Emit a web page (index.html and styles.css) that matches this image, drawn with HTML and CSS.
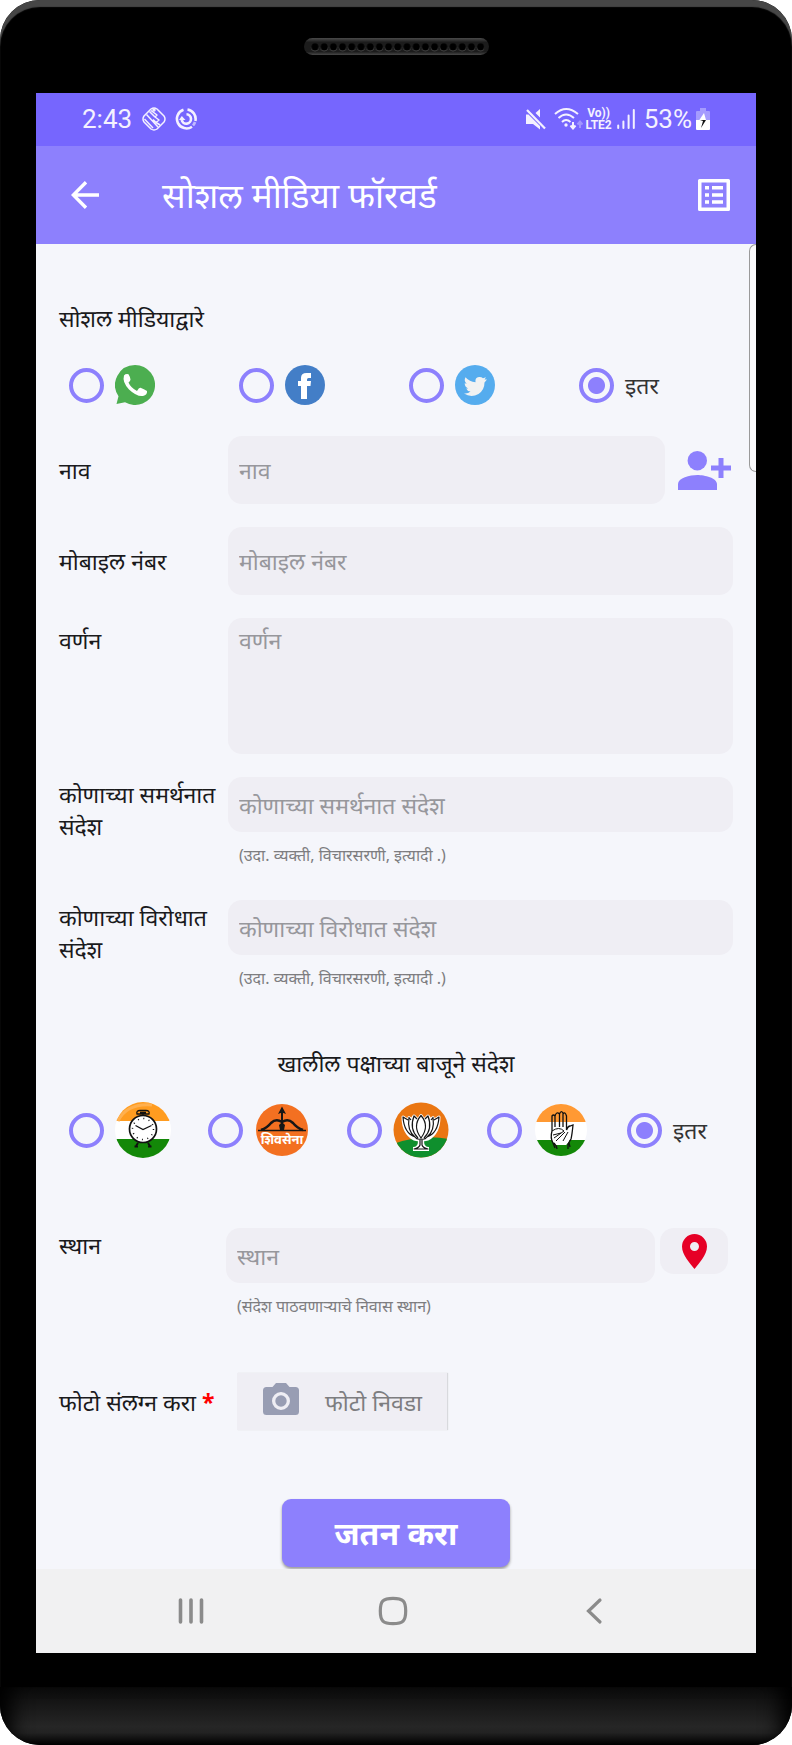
FILE: index.html
```html
<!DOCTYPE html>
<html lang="mr">
<head>
<meta charset="utf-8">
<meta name="viewport" content="width=device-width, initial-scale=1">
<title>सोशल मीडिया फॉरवर्ड</title>
<link rel="stylesheet" href="styles.css">
</head>
<body>
<div class="device">
  <div class="bezel-top">
    <svg class="speaker" viewBox="0 0 185 17" aria-hidden="true">
      <defs>
        <linearGradient id="spk" x1="0" y1="0" x2="0" y2="1"><stop offset="0" stop-color="#4a4a4a"/><stop offset=".25" stop-color="#1c1c1c"/><stop offset=".8" stop-color="#1c1c1c"/><stop offset="1" stop-color="#484848"/></linearGradient>
        <pattern id="holes" x="6.4" y="0" width="9.2" height="17" patternUnits="userSpaceOnUse"><circle cx="4.6" cy="9.6" r="3.8" fill="#4a4a4a"/><circle cx="4.6" cy="8.8" r="3.6" fill="#000"/></pattern>
      </defs>
      <rect width="185" height="17" rx="8.5" fill="url(#spk)"/>
      <rect x="6.4" width="174" height="17" fill="url(#holes)"/>
    </svg>
  </div>

  <div class="screen">
    <div class="status">
      <span class="clock">2:43</span>
      <svg class="ico-chip" viewBox="0 0 24 24" fill="none" stroke="currentColor" stroke-width="1.500" stroke-linejoin="round" aria-hidden="true"><path d="M9 2Q12 0 15 2L22 9Q24 12 22 15L15 22Q12 24 9 22L2 15Q0 12 2 9Z"/><path d="M4.500 7.500L16 20M7.500 4.500L13 10M2.500 12L11 21M9 3.500L15 8L13 10L17 13L14 15.500L18 18M14 15.500L11 12.500"/><circle cx="12" cy="3" r="1"/></svg>
      <svg class="ico-sync" viewBox="0 0 22 22" fill="none" stroke="currentColor" stroke-width="2.600" aria-hidden="true"><path d="M8.500 1.700A9.600 9.600 0 1 0 17 18.700M12.500 1.500A9.600 9.600 0 0 1 20.400 13"/><path d="M20 14A9.600 9.600 0 0 1 18 17.500" opacity=".6"/><path d="M11.500 6.300A4.700 4.700 0 1 1 6.700 12"/><path d="M4 12L6.800 8L10.500 12Z" fill="currentColor" stroke="none"/></svg>
      <span class="spacer"></span>
      <svg class="ico-mute" viewBox="0 0 20 22" fill="currentColor" aria-hidden="true"><path d="M0 6.500H2.500L14 18V21.500L7 16H0ZM14 1V9.500L9.500 5Z"/><path d="M1 2L19 20.500" fill="none" stroke="currentColor" stroke-width="2.200"/></svg>
      <svg class="ico-wifi" viewBox="0 0 29 23" fill="none" stroke="currentColor" stroke-width="2" aria-hidden="true"><path d="M1 7Q12-3 24 7M4.500 11Q12 4 20 11M8 15Q12 11 16.500 15"/><circle cx="12" cy="18" r="1.700" fill="currentColor" stroke="none"/><path d="M19 15V21M16.500 18.500L19 21.500L21.500 18.500"/><path d="M26 21V15M23.500 17.500L26 14.500L28.500 17.500" opacity=".35"/></svg>
      <span class="volte"><span>Vo))</span><span>LTE2</span></span>
      <svg class="ico-bars" viewBox="0 0 18 22" stroke="currentColor" stroke-width="2" stroke-linecap="round" aria-hidden="true"><path d="M1.200 17.500V20M6.400 13.500V20M11.600 7.500V20M16.800 2V20"/></svg>
      <span class="percent">53%</span>
      <svg class="ico-battery" viewBox="0 0 14 22" aria-hidden="true"><path d="M4 0H10V3H13Q14 3 14 4V12H0V4Q0 3 1 3H4Z" fill="#fff" opacity=".35"/><path d="M0 12H14V21Q14 22 13 22H1Q0 22 0 21Z" fill="#fff"/><path d="M8 5L3 12.500H7L10 12Z" fill="#fff"/><path d="M4 12H10L5 20L7 13Z" fill="#111"/></svg>
    </div>

    <header class="appbar">
      <button class="icon-btn back" type="button" aria-label="मागे"><svg viewBox="0 0 28 28" fill="none" stroke="currentColor" stroke-width="3.400" aria-hidden="true"><path d="M28 14H3M15 1.300L2.300 14L15 26.700"/></svg></button>
      <h1>सोशल मीडिया फॉरवर्ड</h1>
      <button class="icon-btn list" type="button" aria-label="यादी"><svg viewBox="0 0 32 32" fill="currentColor" aria-hidden="true"><path fill-rule="evenodd" d="M1.500 0H30.500Q32 0 32 1.500V30.500Q32 32 30.500 32H1.500Q0 32 0 30.500V1.500Q0 0 1.500 0ZM3.500 3.500V28.500H28.500V3.500Z"/><path d="M7 7H11V10.500H7ZM14 7H25V10.500H14ZM7 14.200H11V17.700H7ZM14 14.200H25V17.700H14ZM7 21.300H11V24.800H7ZM14 21.300H25V24.800H14Z"/></svg></button>
    </header>

    <main class="content">
      <div class="scrollbar" aria-hidden="true"></div>
      <form class="form">
        <p class="label" id="via">सोशल मीडियाद्वारे</p>
        <div class="choices social" role="radiogroup" aria-labelledby="via">
          <label class="choice"><input type="radio" name="via" aria-label="WhatsApp">
            <svg width="40" height="40" viewBox="0 0 40 40" aria-hidden="true"><path d="M20 0A20 20 0 1 1 10 37.300L1.500 39L3.500 31.200A20 20 0 0 1 20 0Z" fill="#4cae50"/><path d="M9 10.500Q10.500 8.500 13.500 9.200Q15 11.500 15.500 14.500Q15.500 16 13.500 17.500Q15.500 22.500 22 26Q24 22.500 25.500 22.800Q29 24 32 26Q32.500 30 28 31Q22 32 14 24.500Q7 17 9 10.500Z" fill="#fff"/></svg></label>
          <label class="choice"><input type="radio" name="via" aria-label="Facebook">
            <svg width="40" height="40" viewBox="0 0 40 40" aria-hidden="true"><circle cx="20" cy="20" r="20" fill="#437ec7"/><path d="M16 34V21H13V16H16V13Q16 8 21.500 8H26V13H23.500Q22 13 22 14.500V16H26L25.500 21H22V34Z" fill="#fff"/></svg></label>
          <label class="choice"><input type="radio" name="via" aria-label="Twitter">
            <svg width="40" height="40" viewBox="0 0 40 40" aria-hidden="true"><circle cx="20" cy="20" r="20" fill="#55acee"/><path d="M32 14.500L29.500 17.500Q29.500 25 23.500 29Q16 33 9 28.500Q13 29 15.500 26.500Q12 26 11.200 23.500H13.200Q9.700 22 9.700 18.300L11.700 18.800Q8.500 16 10.500 12.300Q14.500 17 20.500 17.200Q19.800 12.500 24 12Q26.500 11.800 28 13.300L31 12.200L29.500 14.500Z" fill="#f1f2f2"/></svg></label>
          <label class="choice"><input type="radio" name="via" checked><span>इतर</span></label>
        </div>

        <div class="row">
          <label class="label" for="name">नाव</label>
          <input class="field tall" id="name" type="text" placeholder="नाव">
          <button class="add" type="button" aria-label="संपर्क जोडा"><svg viewBox="0 0 53 39" fill="currentColor" aria-hidden="true"><circle cx="19.300" cy="9.700" r="9.700"/><path d="M0 39V33C0 27 12 24 19.300 24S39 27 39 33V39ZM40.500 7H45.500V14.500H53V19.500H45.500V27H40.500V19.500H33V14.500H40.500Z"/></svg></button>
        </div>
        <div class="row">
          <label class="label" for="mobile">मोबाइल नंबर</label>
          <input class="field tall" id="mobile" type="tel" placeholder="मोबाइल नंबर">
        </div>
        <div class="row top area-row">
          <label class="label" for="desc">वर्णन</label>
          <textarea class="field area" id="desc" placeholder="वर्णन"></textarea>
        </div>
        <div class="row top">
          <label class="label" for="support">कोणाच्या समर्थनात संदेश</label>
          <div class="stack"><input class="field" id="support" type="text" placeholder="कोणाच्या समर्थनात संदेश"><p class="hint">(उदा. व्यक्ती, विचारसरणी, इत्यादी .)</p></div>
        </div>
        <div class="row top oppose">
          <label class="label" for="oppose">कोणाच्या विरोधात संदेश</label>
          <div class="stack"><input class="field" id="oppose" type="text" placeholder="कोणाच्या विरोधात संदेश"><p class="hint">(उदा. व्यक्ती, विचारसरणी, इत्यादी .)</p></div>
        </div>

        <p class="label party-title" id="party">खालील पक्षाच्या बाजूने संदेश</p>
        <div class="choices parties" role="radiogroup" aria-labelledby="party">
          <label class="choice"><input type="radio" name="party" aria-label="राष्ट्रवादी">
            <svg width="56" height="56" viewBox="0 0 56 56" aria-hidden="true"><defs><clipPath id="c1"><circle cx="28" cy="28" r="28"/></clipPath></defs><g clip-path="url(#c1)"><path fill="#fff" d="M0 0H56V56H0Z"/><path fill="#ff9c20" d="M0 0H56V19H0Z"/><path fill="#138808" d="M0 37H56V56H0Z"/><path d="M3 19Q12 1 37 3" fill="none" stroke="#ffb04f" stroke-width="3"/></g>
              <g fill="none" stroke="#111"><path d="M23 41L21 44M33 41L35 44" stroke-width="2"/><path d="M19.500 44.500H23M33 44.500H36.500" stroke-width="2"/><circle cx="28" cy="27" r="13.500" fill="#fff" stroke-width="1.700"/><path d="M22 12Q21 8.500 25 8.500H31Q35 8.500 34 12ZM25 10.500H31M28 10.500V14" stroke-width="1.300"/><circle cx="28" cy="27" r="10.500" stroke-dasharray="1 4.500" stroke-width="1.500"/><path d="M20.500 23.500L28 27.500L36.500 23.500" stroke-width="1.300"/></g></svg></label>
          <label class="choice"><input type="radio" name="party" aria-label="शिवसेना">
            <svg width="56" height="56" viewBox="-2 -2 56 56" aria-hidden="true"><circle cx="26" cy="26" r="26" fill="#f37021"/><g fill="none" stroke="#161616"><path d="M2 26.500H50" stroke-width="1.700"/><path d="M5 26Q11 24 15 19Q20 14 26 18Q32 14 37 19Q41 24 47 26" stroke-width="2.500"/><path d="M26 26V7" stroke-width="2"/></g><path d="M26 2.500L30 10L26 8.500L22 10ZM24 26L23 21L26 18L29 21L28 26Z" fill="#161616"/><text class="badge-text" x="26" y="40" text-anchor="middle">शिवसेना</text></svg></label>
          <label class="choice"><input type="radio" name="party" aria-label="भाजप">
            <svg width="56" height="56" viewBox="0 0 56 56" aria-hidden="true"><defs><clipPath id="c3"><circle cx="28" cy="28" r="27.500"/></clipPath></defs><g clip-path="url(#c3)"><path fill="#ea7612" d="M0 0H56V56H0Z"/><path fill="#0f8f2d" d="M0 42Q28 32 56 37V56H0Z"/></g>
              <g stroke-linejoin="round"><path d="M28 37V45M20 47Q27 47 27 39M36 47Q29 47 29 39M20 47H36" fill="none" stroke="#fff" stroke-width="4"/><path d="M28 13.500L31 18L35 14L37.500 18L40 15.500L40 19L46 15Q46 31 35 37Q28 39 21 37Q10 31 10 15L16 19L16 15.500L18.500 18L21 14L25 18Z" fill="#fff" stroke="#fff" stroke-width="3"/><g fill="none" stroke="#151515" stroke-width="1.200"><path d="M28 13.500Q19 24 28 36Q37 24 28 13.500ZM24 17L21 14Q16 27 25 36M32 17L35 14Q40 27 31 36M18 18L16 15.500Q14 29 22 35M38 18L40 15.500Q42 29 34 35M15 18L10 15Q11 31 22 35Q24 38 28 37Q32 38 34 35Q45 31 46 15L41 18"/><path d="M27 38V43Q26 46 21 47H35Q30 46 29 43V38"/></g></g></svg></label>
          <label class="choice"><input type="radio" name="party" aria-label="काँग्रेस">
            <svg width="56" height="56" viewBox="-2 -2 56 56" aria-hidden="true"><defs><clipPath id="c4"><circle cx="26" cy="26" r="26"/></clipPath></defs><g clip-path="url(#c4)"><path fill="#fff" d="M0 0H52V52H0Z"/><path fill="#ff9933" d="M0 0H52V18H0Z"/><path fill="#138808" d="M0 36H52V52H0Z"/></g><path d="M17 27Q24 23 31 26L34 24L37 23L34 38L31 41H20L17 36Z" fill="#fff"/><path d="M17 27V12Q18.500 10 20 12V23M20 12Q21.500 7 24.500 10V23M24.500 10Q26 6 28 9V23M28 10Q30 7 31.500 12V26Q33 22 35 22L38 21Q37 31 36 35L33 40V45M17 27Q15 34 18 39L20 44M19 39Q22 42 22 45M34 39L35 43" fill="none" stroke="#111" stroke-width="1.300"/><path d="M17 27Q24 22 29 27L19 34M30 28L21 37M18 31L26 29M33 28L28 37" fill="none" stroke="#111" stroke-width="1"/></svg></label>
          <label class="choice"><input type="radio" name="party" checked><span>इतर</span></label>
        </div>

        <div class="row top place">
          <label class="label" for="place">स्थान</label>
          <div class="stack"><input class="field" id="place" type="text" placeholder="स्थान"><p class="hint">(संदेश पाठवणाऱ्याचे निवास स्थान)</p></div>
          <button class="pin" type="button" aria-label="नकाशावर निवडा"><svg viewBox="0 0 25 35" aria-hidden="true"><path fill-rule="evenodd" d="M12.500 0A12.500 12.500 0 0 1 25 12.500C25 21 17 29 12.500 35C8 29 0 21 0 12.500A12.500 12.500 0 0 1 12.500 0ZM12.500 8A4.500 4.500 0 1 0 12.500 17A4.500 4.500 0 1 0 12.500 8Z" fill="#e60026"/></svg></button>
        </div>

        <div class="row photo-row">
          <label class="label" for="photo">फोटो संलग्न करा <b class="req">*</b></label>
          <button class="photo" id="photo" type="button"><svg viewBox="0 0 36 32" aria-hidden="true"><path fill-rule="evenodd" d="M3.500 4H9.500L13 0H23L26.500 4H32.500Q36 4 36 7.500V28.500Q36 32 32.500 32H3.500Q0 32 0 28.500V7.500Q0 4 3.500 4ZM18 9A9 9 0 1 0 18 27A9 9 0 1 0 18 9Z" fill="#989db3"/><circle cx="18" cy="18" r="5.700" fill="#989db3"/></svg>फोटो निवडा</button>
        </div>

        <button class="save" type="submit">जतन करा</button>
      </form>
    </main>

    <nav class="navbar">
      <button type="button" aria-label="अलीकडील"><svg width="28" height="28" viewBox="0 0 28 28" fill="none" stroke="currentColor" stroke-width="3.600" stroke-linecap="round" aria-hidden="true"><path d="M3.500 3V25M14 3V25M24.500 3V25"/></svg></button>
      <button type="button" aria-label="होम"><svg width="30" height="30" viewBox="0 0 30 30" fill="none" stroke="currentColor" stroke-width="3.200" aria-hidden="true"><path d="M15 2.300C25 2.300 27.700 5 27.700 15S25 27.700 15 27.700S2.300 25 2.300 15S5 2.300 15 2.300Z"/></svg></button>
      <button type="button" aria-label="परत"><svg width="28" height="28" viewBox="0 0 28 28" fill="none" stroke="currentColor" stroke-width="3.200" stroke-linecap="round" aria-hidden="true"><path d="M20 3L8.500 14L20 25"/></svg></button>
    </nav>
  </div>

  <div class="chin"></div>
</div>
</body>
</html>
```
FILE: styles.css
```css
* { box-sizing: border-box; }
body {
  margin: 0;
  background: #fff;
  font-family: "Noto Sans", "Noto Sans Devanagari", sans-serif;
  font-size: 23px;
  line-height: 32px;
  color: #1a1a1c;
}
button, input, textarea { font: inherit; color: inherit; border: 0; margin: 0; }
button { background: none; padding: 0; cursor: pointer; }
h1, p { margin: 0; }
svg { display: block; flex: none; }

/* Handset */
.device {
  min-height: 100vh;
  display: flex;
  flex-direction: column;
  background: #000;
  border-radius: 40px;
  overflow: hidden;
  box-shadow: inset 0 7px 1px #464646;
}
.bezel-top { height: 93px; padding-top: 38px; }
.speaker { width: 185px; height: 17px; margin: 0 auto; }
.screen {
  flex: 1;
  display: flex;
  flex-direction: column;
  margin: 0 36px 34px;
  background: #f5f6fb;
}
.chin {
  height: 58px;
  background: linear-gradient(#0b0b0b, #262626 68%, #222 80%, #000);
  box-shadow: inset 24px 0 20px -12px #000, inset -24px 0 20px -12px #000;
}

/* Status bar */
.status {
  height: 53px;
  padding: 0 46px 2px;
  display: flex;
  align-items: center;
  background: #7666fe;
  color: #f4f1ff;
  font-family: Roboto, sans-serif;
  font-size: 26px;
}
.spacer { flex: 1; }
.ico-chip { width: 24px; height: 24px; margin-left: 10px; }
.ico-sync { width: 22px; height: 22px; margin-left: 9px; }
.ico-mute { width: 20px; height: 22px; }
.ico-wifi { width: 29px; height: 23px; margin-left: 8px; }
.volte {
  display: flex;
  flex-direction: column;
  align-items: center;
  margin-left: 2px;
  font-size: 12px;
  line-height: 12px;
  font-weight: 700;
}
.ico-bars { width: 18px; height: 22px; margin: 0 9px 0 5px; }
.ico-battery { width: 14px; height: 22px; margin-left: 4px; }

/* App bar */
.appbar {
  height: 98px;
  padding: 0 26px 0 35px;
  display: flex;
  align-items: center;
  background: #8d80fd;
  color: #fff;
}
.appbar h1 { flex: 1; margin-left: 63px; font-size: 35px; line-height: 48px; font-weight: 400; }
.back svg { width: 28px; height: 28px; }
.list svg { width: 32px; height: 32px; }

/* Form */
.content { position: relative; flex: 1; overflow: hidden; }
.scrollbar {
  position: absolute;
  top: 0;
  right: 0;
  width: 7px;
  height: 228px;
  border: 1px solid #9a9a9a;
  border-right: 0;
  border-radius: 7px 0 0 7px;
  background: #fafafc;
}
.form { display: flex; flex-direction: column; padding: 58px 23px 0; }
.choices { display: grid; padding-left: 10px; align-items: center; }
.social { grid-template-columns: repeat(4, 170px); margin: 31px 0; }
.parties { grid-template-columns: 139px 139px 140px 140px 1fr; height: 56px; margin: 23px 0 70px; }
.choice { display: flex; align-items: center; gap: 11px; color: #333; }
.choice input {
  appearance: none;
  flex: none;
  width: 35px;
  height: 35px;
  border: 4px solid #8d80fd;
  border-radius: 50%;
}
.choice input:checked { background: radial-gradient(circle, #8d80fd 8px, transparent 9px); }
.badge-text { fill: #fff; font-size: 13px; font-weight: 700; }

.row { display: flex; align-items: center; margin-bottom: 23px; }
.row .label { flex: none; width: 169px; }
.top { align-items: flex-start; }
.top .label { padding-top: 1px; }
.area-row .label { padding-top: 6px; }
.field {
  display: block;
  flex: 1;
  width: 100%;
  min-width: 0;
  height: 55px;
  padding: 0 11px;
  border-radius: 14px;
  background: #efeef4;
}
.field::placeholder { color: #97979c; opacity: 1; }
.tall { height: 68px; }
.area { height: 136px; padding: 6px 11px; resize: none; }
.add { margin: 0 2px 0 13px; color: #8d80fd; }
.add svg { width: 53px; height: 39px; }
.stack { flex: 1; min-width: 0; }
.hint { margin-top: 7px; padding-left: 11px; font-size: 16px; color: #7d7d80; }
.top.oppose { margin: 6px 0 53px; }
.party-title { text-align: center; }
.place { margin: 0 5px 51px 0; }
.place .label { width: 167px; }
.pin {
  display: flex;
  align-items: center;
  justify-content: center;
  width: 68px;
  height: 46px;
  margin-left: 5px;
  border-radius: 14px;
  background: #efeef4;
}
.pin svg { width: 25px; height: 35px; }
.photo-row { margin-bottom: 69px; }
.photo-row .label { width: 178px; }
.req { color: #f00; }
.photo {
  display: flex;
  align-items: center;
  gap: 26px;
  height: 57px;
  padding: 0 25px 0 26px;
  background: #efeef4;
  box-shadow: 1px 0 1px #d8d9dd;
  color: #7d7d80;
}
.photo svg { width: 36px; height: 32px; margin-bottom: 5px; }
.save {
  align-self: center;
  width: 228px;
  height: 68px;
  border-radius: 9px;
  background: #8d80fd;
  box-shadow: 0 2px 3px #999;
  color: #fff;
  font-size: 32px;
  font-weight: 700;
}

/* System navigation */
.navbar {
  position: relative;
  height: 84px;
  padding: 0 148px 0 141px;
  display: flex;
  align-items: center;
  justify-content: space-between;
  background: #f1f1f2;
  color: #8b8b8b;
}
```
